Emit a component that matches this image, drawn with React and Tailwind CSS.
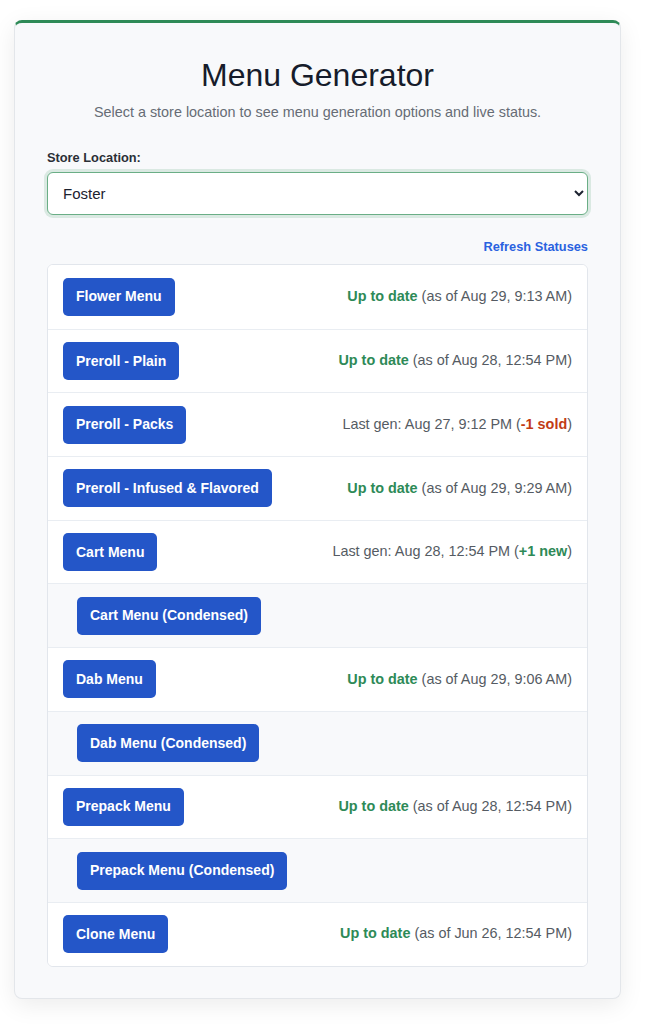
import React from "react";

const rows = [
  { name: "Flower Menu", status: "ok", when: "Aug 29, 9:13 AM" },
  { name: "Preroll - Plain", status: "ok", when: "Aug 28, 12:54 PM" },
  { name: "Preroll - Packs", status: "gen", when: "Aug 27, 9:12 PM", delta: "-1 sold", bad: true },
  { name: "Preroll - Infused & Flavored", status: "ok", when: "Aug 29, 9:29 AM" },
  { name: "Cart Menu", status: "gen", when: "Aug 28, 12:54 PM", delta: "+1 new" },
  { name: "Cart Menu (Condensed)", sub: true },
  { name: "Dab Menu", status: "ok", when: "Aug 29, 9:06 AM" },
  { name: "Dab Menu (Condensed)", sub: true },
  { name: "Prepack Menu", status: "ok", when: "Aug 28, 12:54 PM" },
  { name: "Prepack Menu (Condensed)", sub: true },
  { name: "Clone Menu", status: "ok", when: "Jun 26, 12:54 PM" },
];

const Status = ({ row }) => {
  if (row.sub) return null;
  if (row.status === "ok") {
    return (
      <span className="text-[14.4px] text-[#555b63]">
        <b className="text-[#2e8a57]">Up to date</b> (as of {row.when})
      </span>
    );
  }
  return (
    <span className="text-[14.4px] text-[#555b63]">
      Last gen: {row.when} (
      <b className={row.bad ? "text-[#c23b14]" : "text-[#2e8a57]"}>{row.delta}</b>)
    </span>
  );
};

const App = () => {
  return (
    <div className="min-h-screen bg-white pt-5 font-['Liberation_Sans',Arial,sans-serif]">
      <div className="ml-[14px] w-[607px] rounded-lg border border-[#e3e6ea] border-t-[3px] border-t-[#2e8a57] bg-[#f8f9fb] px-[32px] pt-[33px] pb-[31px] shadow-[0_6px_24px_rgba(0,0,0,0.08)]">
        {/* Header */}
        <h1 className="text-center text-[32px] leading-[38px] text-[#161c2b]">Menu Generator</h1>
        <p className="mt-[8px] text-center text-[14.4px] leading-[21px] text-[#666c75]">
          Select a store location to see menu generation options and live status.
        </p>

        {/* Store select */}
        <label className="mt-[25px] block text-[12.8px] font-bold leading-[19px] text-[#2b2f36]">
          Store Location:
        </label>
        <select
          defaultValue="Foster"
          className="mt-[5px] h-[43px] w-full rounded-md border border-[#6aae86] bg-white pl-[11px] pr-2 text-[15px] text-[#1c2230] shadow-[0_0_0_3px_rgba(46,138,87,0.15)] outline-none"
        >
          <option>Foster</option>
        </select>

        <div className="mt-[22px] flex justify-end">
          <a className="text-[12.8px] font-bold leading-[19px] text-[#2a62e0]">Refresh Statuses</a>
        </div>

        {/* Menu list */}
        <div className="mt-[8px] overflow-hidden rounded-md border border-[#e2e6ec] bg-white">
          {rows.map((row, i) => (
            <div
              key={row.name}
              className={`flex h-[63.7px] items-center justify-between pr-[15px] ${
                i > 0 ? "border-t border-[#e9edf2]" : ""
              } ${row.sub ? "bg-[#f8f9fb] pl-[29px]" : "bg-white pl-[15px]"}`}
            >
              <button className="h-[38px] rounded-[5px] bg-[#2456c8] px-[13px] text-[14px] font-bold text-white">
                {row.name}
              </button>
              <Status row={row} />
            </div>
          ))}
        </div>
      </div>
    </div>
  );
};

export default App;
